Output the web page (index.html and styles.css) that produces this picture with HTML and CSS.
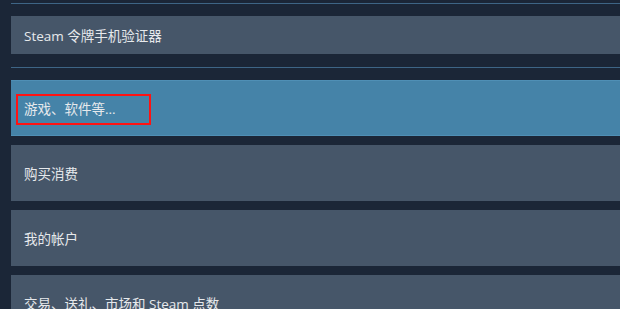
FILE: index.html
```html
<!DOCTYPE html>
<html lang="zh-CN">
<head>
<meta charset="utf-8">
<title>Steam 客服</title>
<link rel="stylesheet" href="styles.css">
</head>
<body>
<div class="page">
  <div class="rule rule-top"></div>
  <div class="btn btn-short">Steam 令牌手机验证器</div>
  <div class="rule rule-mid"></div>
  <div class="list">
    <div class="btn btn-active">
      <span class="label">游戏、软件等...</span>
      <span class="mark"></span>
    </div>
    <div class="btn">购买消费</div>
    <div class="btn">我的帐户</div>
    <div class="btn">交易、送礼、市场和 Steam 点数</div>
  </div>
</div>
</body>
</html>
```
FILE: styles.css
```css
html, body {
  margin: 0;
  padding: 0;
  background: #1b2637;
  height: 100%;
  overflow: hidden;
}
.page {
  padding-left: 11px;
  font-family: "Open Sans", "Noto Sans CJK SC", sans-serif;
  font-size: 13.5px;
  color: #e6e9ec;
}
.rule {
  height: 1px;
  background: #3e6586;
}
.rule-top {
  margin-top: 3px;
}
.btn {
  display: flex;
  align-items: center;
  box-sizing: border-box;
  height: 56px;
  padding-left: 13px;
  background: #465669;
  position: relative;
  white-space: nowrap;
}
.btn-short {
  height: 38px;
  margin-top: 12px;
}
.rule-mid {
  margin-top: 13px;
}
.list {
  margin-top: 12px;
  display: flex;
  flex-direction: column;
  gap: 9px;
}
.btn-active {
  background: #4583a8;
  border-top: 1px solid #4f8fb5;
  border-bottom: 1px solid #4f8fb5;
}
.mark {
  position: absolute;
  left: 5px;
  top: 13px;
  width: 131px;
  height: 27px;
  border: 2px solid #ff1212;
}
```
